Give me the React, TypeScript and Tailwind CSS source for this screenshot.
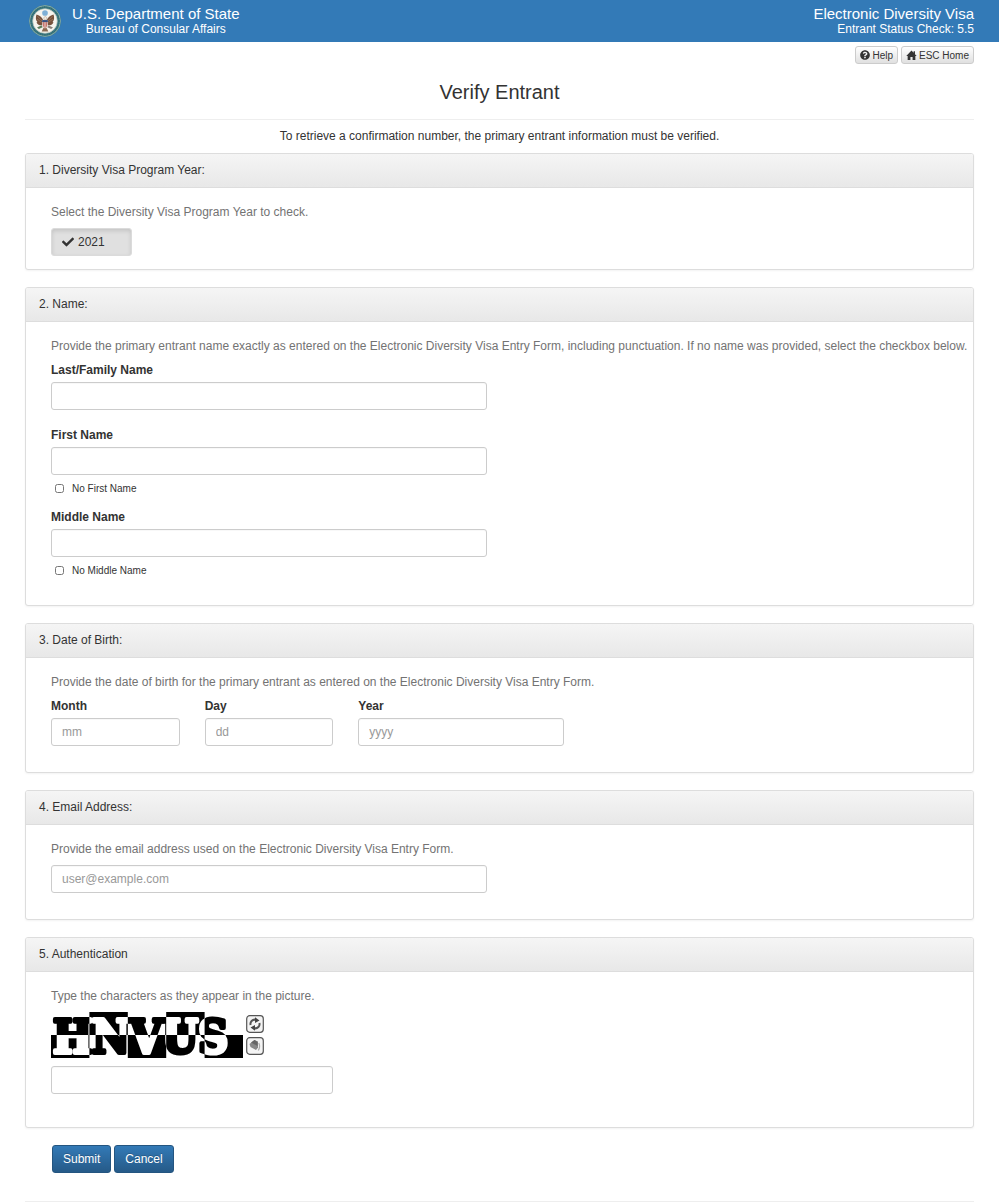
import React, { useState } from 'react';
import { FaCheck, FaQuestionCircle } from 'react-icons/fa';

const INPUT =
  'block w-full h-7 px-[10px] text-xs text-[#555] placeholder:text-[#999] bg-white border border-[#ccc] rounded-[3px] shadow-[inset_0_1px_1px_rgba(0,0,0,0.03)] outline-none focus:border-[#66afe9]';
const LABEL = 'block mb-[3px] font-bold text-[#333]';
const CHECK_LABEL = 'flex items-center gap-2 mt-[5px] pl-1 text-[10px]';
const SMALL_BUTTON =
  'inline-flex items-center gap-[2px] h-[18px] px-1 text-[10px] text-[#333] border border-[#ccc] rounded-[3px] bg-linear-to-b from-white to-[#e0e0e0]';
const PRIMARY_BUTTON =
  'h-7 px-[10px] text-xs text-white border border-[#245580] rounded-[3px] bg-linear-to-b from-[#337ab7] to-[#265a88] hover:to-[#337ab7] [text-shadow:0_-1px_0_rgba(0,0,0,0.2)]';

const Seal: React.FC = () => (
  <svg viewBox="0 0 36 36" className="size-[34px]" aria-hidden="true">
    <circle cx="18" cy="18" r="17" fill="#3f7f96" />
    <circle cx="18" cy="18" r="16.2" fill="none" stroke="#9cb7a8" strokeWidth="0.9" />
    <circle cx="18" cy="18" r="14.5" fill="none" stroke="#356f70" strokeWidth="2.2" strokeDasharray="1.4 0.5" />
    <circle cx="18" cy="18" r="13" fill="#f6f4ee" stroke="#b9c5b5" strokeWidth="0.7" />
    {/* eagle wings */}
    <path
      d="M16 17c-1-3-3-5-7-6-1 3-1 6 1 8l-1 .5c1 2 3 3 5 3l2-1zM20 17c1-3 3-5 7-6 1 3 1 6-1 8l1 .5c-1 2-3 3-5 3l-2-1z"
      fill="#76513c"
    />
    <path d="M10 13l5 5M9.5 16l5 3.5M26 13l-5 5M26.5 16l-5 3.5" stroke="#a98668" strokeWidth="0.6" />
    <path d="M16.5 25l-2 4h7l-2-4z" fill="#8a6a52" />
    <path d="M14.5 22.5l-5 2.5 2 1.5 4-2z" fill="#5b7d5a" />
    <path d="M21.5 22.5l5 2.5-2 1.5-4-2z" fill="#8b8279" />
    <circle cx="18" cy="9.5" r="3" fill="#7fb0d6" />
    <path d="M16.700 15c0-2 3-2.500 3.200 0l-.6 2h-2z" fill="#efe9df" stroke="#8f7c6b" strokeWidth="0.4" />
    <path d="M15 17h6v5c0 2-2 3.500-3 4-1-.5-3-2-3-4z" fill="#e9d5cf" />
    <path d="M15 17h6v2.200h-6z" fill="#35507f" />
    <path d="M16.300 19.200v4.800M18 19.200v6.500M19.700 19.200v4.800" stroke="#b5483f" strokeWidth="0.8" />
  </svg>
);

const HomeIcon: React.FC = () => (
  <svg viewBox="0 0 12 12" className="size-[11px]" fill="currentColor" aria-hidden="true">
    <path d="M6 .5L.3 6.600h1.500V11h3V7.500h2.400V11h3V6.600h1.500L9.800 4.500V1.300H8.300v1.600z" />
  </svg>
);

const CELL = 38.4;

const Captcha: React.FC = () => (
  <svg viewBox="0 0 192 46" className="w-48 h-[46px] isolate overflow-visible" role="img" aria-label="Security characters">
    <rect width="192" height="46" fill="#fff" />
    {[0, 1, 2, 3, 4].map((i) => (
      <rect key={i} x={i * CELL} y={i % 2 ? 0 : 23} width={CELL} height="23" fill="#000" />
    ))}
    <text
      x="2"
      y="41"
      className="mix-blend-difference"
      fill="#fff"
      stroke="#fff"
      strokeWidth="4"
      strokeLinejoin="round"
      fontFamily="'DejaVu Serif Condensed', 'DejaVu Serif', serif"
      fontWeight="bold"
      fontSize="46"
    >
      HNVUS
    </text>
  </svg>
);

type PanelProps = { title: string; className: string; children: React.ReactNode };

const Panel: React.FC<PanelProps> = ({ title, className, children }) => (
  <section className="mb-[17px] bg-white border border-[#ddd] rounded-[3px] shadow-[0_1px_2px_rgba(0,0,0,0.05)]">
    <h2 className="px-[13px] py-2 text-[#333] bg-linear-to-b from-[#f5f5f5] to-[#e8e8e8] border-b border-[#ddd] rounded-t-[2px]">
      {title}
    </h2>
    <div className={`px-[25px] pt-4 ${className}`}>{children}</div>
  </section>
);

const Hint: React.FC<{ children: React.ReactNode }> = ({ children }) => (
  <p className="-mr-6 mb-[7px] text-[#737373]">{children}</p>
);

const DATE_FIELDS = [
  { id: 'month', label: 'Month', placeholder: 'mm', span: 'col-span-2' },
  { id: 'day', label: 'Day', placeholder: 'dd', span: 'col-span-2' },
  { id: 'year', label: 'Year', placeholder: 'yyyy', span: 'col-span-3' },
];

const App: React.FC = () => {
  const [yearSelected, setYearSelected] = useState(true);

  return (
    <div className="min-h-screen bg-white text-xs leading-[17px] text-[#333] font-['Liberation_Sans',Arial,sans-serif]">
      <header className="flex justify-between items-center h-[42px] pl-7 pr-[25px] bg-[#337ab7] text-white">
        <div className="flex items-center gap-[10px]">
          <Seal />
          <div className="text-center">
            <div className="text-[15px] leading-4">U.S. Department of State</div>
            <div className="leading-[15px]">Bureau of Consular Affairs</div>
          </div>
        </div>
        <div className="text-right">
          <div className="text-[15px] leading-4">Electronic Diversity Visa</div>
          <div className="leading-[15px]">Entrant Status Check: 5.5</div>
        </div>
      </header>

      <main className="px-[25px]">
        <nav className="flex justify-end gap-[3px] pt-1">
          <button type="button" className={SMALL_BUTTON}>
            <FaQuestionCircle size={10} /> Help
          </button>
          <button type="button" className={SMALL_BUTTON}>
            <HomeIcon /> ESC Home
          </button>
        </nav>

        <h1 className="mt-4 pb-[15px] text-xl leading-6 text-center border-b border-[#eee]">Verify Entrant</h1>
        <p className="mt-2 mb-2 text-center">
          To retrieve a confirmation number, the primary entrant information must be verified.
        </p>

        <form onSubmit={(e) => e.preventDefault()}>
          <Panel title="1. Diversity Visa Program Year:" className="pb-[13px]">
            <Hint>Select the Diversity Visa Program Year to check.</Hint>
            <button
              type="button"
              aria-pressed={yearSelected}
              onClick={() => setYearSelected(!yearSelected)}
              className="flex items-center gap-1 w-[81px] h-7 px-[10px] text-xs bg-[#e0e0e0] border border-[#dbdbdb] rounded-[3px] shadow-[inset_0_2px_4px_rgba(0,0,0,0.125)]"
            >
              <FaCheck size={12} className={yearSelected ? '' : 'invisible'} /> 2021
            </button>
          </Panel>

          <Panel title="2. Name:" className="pb-[26px]">
            <Hint>
              Provide the primary entrant name exactly as entered on the Electronic Diversity Visa Entry Form, including
              punctuation. If no name was provided, select the checkbox below.
            </Hint>
            <div className="grid grid-cols-12 gap-x-[25px]">
              <div className="col-span-6">
                <label htmlFor="last" className={LABEL}>Last/Family Name</label>
                <input id="last" type="text" className={INPUT} />

                <label htmlFor="first" className={`mt-[17px] ${LABEL}`}>First Name</label>
                <input id="first" type="text" className={INPUT} />
                <label className={CHECK_LABEL}>
                  <input type="checkbox" className="size-[9px]" /> No First Name
                </label>

                <label htmlFor="middle" className={`mt-3 ${LABEL}`}>Middle Name</label>
                <input id="middle" type="text" className={INPUT} />
                <label className={CHECK_LABEL}>
                  <input type="checkbox" className="size-[9px]" /> No Middle Name
                </label>
              </div>
            </div>
          </Panel>

          <Panel title="3. Date of Birth:" className="pb-[26px]">
            <Hint>
              Provide the date of birth for the primary entrant as entered on the Electronic Diversity Visa Entry Form.
            </Hint>
            <div className="grid grid-cols-12 gap-x-[25px]">
              {DATE_FIELDS.map((f) => (
                <div key={f.id} className={f.span}>
                  <label htmlFor={f.id} className={LABEL}>{f.label}</label>
                  <input id={f.id} type="text" placeholder={f.placeholder} className={INPUT} />
                </div>
              ))}
            </div>
          </Panel>

          <Panel title="4. Email Address:" className="pb-[26px]">
            <Hint>Provide the email address used on the Electronic Diversity Visa Entry Form.</Hint>
            <div className="grid grid-cols-12 gap-x-[25px]">
              <div className="col-span-6">
                <input type="email" aria-label="Email Address" placeholder="user@example.com" className={INPUT} />
              </div>
            </div>
          </Panel>

          <Panel title="5. Authentication" className="pb-[33px]">
            <Hint>Type the characters as they appear in the picture.</Hint>
            <div className="flex gap-[3px] mb-2">
              <Captcha />
              <div className="flex flex-col justify-center gap-1">
                <button type="button" aria-label="New characters" className="size-[18px] rounded-[3px]">
                  <svg viewBox="0 0 18 18" className="size-[18px]">
                    <rect x="0.7" y="0.7" width="16.6" height="16.6" rx="3" fill="#f4f4f4" stroke="#555" strokeWidth="1.2" />
                    <path d="M4.600 10A4.300 4.300 0 0 1 9.500 4.700M13.400 8A4.300 4.300 0 0 1 8.500 13.300" fill="none" stroke="#555" strokeWidth="2" />
                    <path d="M9 2.200l4.500 3.300-4.500 2.500zM9 15.800l-4.500-3.300 4.500-2.500z" fill="#444" />
                  </svg>
                </button>
                <button type="button" aria-label="Play sound" className="size-[18px] rounded-[3px]">
                  <svg viewBox="0 0 18 18" className="size-[18px]">
                    <rect x="0.7" y="0.7" width="16.6" height="16.6" rx="3" fill="#f4f4f4" stroke="#555" strokeWidth="1.2" />
                    <path d="M3.500 7l5-4 3.500 1.500v6l-2 2.500-5.500-3z" fill="#888" />
                    <path d="M5 5.500l3.500-2.500 3 2v4z" fill="#666" />
                    <path d="M12.800 6c1.200 2.500 1 5-.5 7.500" fill="none" stroke="#aaa" strokeWidth="1.200" />
                  </svg>
                </button>
              </div>
            </div>
            <div className="grid grid-cols-12 gap-x-[25px]">
              <div className="col-span-4">
                <input type="text" aria-label="Characters" className={INPUT} />
              </div>
            </div>
          </Panel>

          <div className="flex gap-[3px] pl-[27px] pb-7 border-b border-[#eee]">
            <button type="submit" className={PRIMARY_BUTTON}>Submit</button>
            <button type="button" className={PRIMARY_BUTTON}>Cancel</button>
          </div>
        </form>
      </main>
    </div>
  );
};

export default App;
